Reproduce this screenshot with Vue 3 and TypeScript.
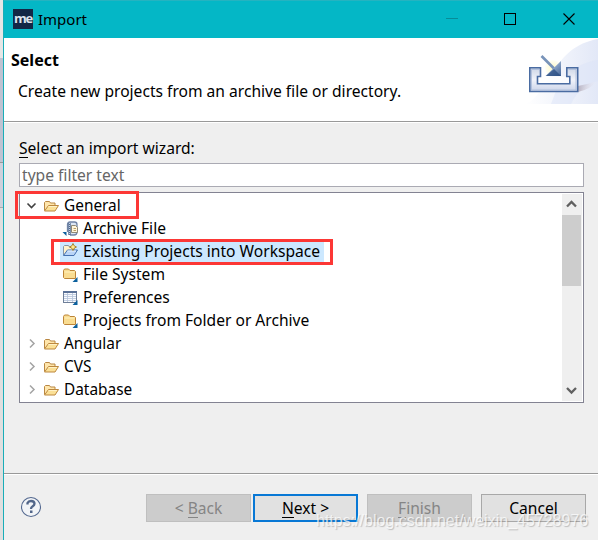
<script setup lang="ts">
import { ref } from 'vue'

type Icon = 'open' | 'archive' | 'existing' | 'folder' | 'table'

interface TreeRow {
  label: string
  icon: Icon
  level: number
  expanded?: boolean
}

const filter = ref('')
const selected = ref('Existing Projects into Workspace')
const rows: TreeRow[] = [
  { label: 'General', icon: 'open', level: 0, expanded: true },
  { label: 'Archive File', icon: 'archive', level: 1 },
  { label: 'Existing Projects into Workspace', icon: 'existing', level: 1 },
  { label: 'File System', icon: 'folder', level: 1 },
  { label: 'Preferences', icon: 'table', level: 1 },
  { label: 'Projects from Folder or Archive', icon: 'folder', level: 1 },
  { label: 'Angular', icon: 'open', level: 0 },
  { label: 'CVS', icon: 'open', level: 0 },
  { label: 'Database', icon: 'open', level: 0 },
]
</script>

<template>
  <div class="screen">
    <div class="backdrop"><i class="pale"></i><i class="blue"></i><i class="blue second"></i><i class="grey"></i></div>
    <div class="window">
      <header class="titlebar">
        <span class="logo"><b>me</b></span>
        <span class="title">Import</span>
        <svg class="controls" width="150" height="38" viewBox="0 0 150 38" fill="none">
          <path d="M8 17.500h12" stroke="#078c98" />
          <rect x="66.500" y="12.500" width="11" height="11" stroke="#000" />
          <path d="M125.500 12.500l11 11M136.500 12.500l-11 11" stroke="#000" stroke-width="1.100" />
        </svg>
      </header>

      <section class="banner">
        <div class="banner-text">
          <h1>Select</h1>
          <p>Create new projects from an archive file or directory.</p>
        </div>
        <svg class="banner-art" width="75" height="66" viewBox="0 0 75 66">
          <defs>
            <linearGradient id="sky" x1="0" y1="0" x2="1" y2="0">
              <stop offset="0" stop-color="#fff" />
              <stop offset="1" stop-color="#dbe2f5" />
            </linearGradient>
            <linearGradient id="tray" x1="0" y1="0" x2="0" y2="1">
              <stop offset="0" stop-color="#cdd6e6" />
              <stop offset=".5" stop-color="#f1f3fa" />
              <stop offset="1" stop-color="#cbd4e9" />
            </linearGradient>
            <linearGradient id="arrow" x1="0" y1="0" x2="1" y2="1">
              <stop offset="0" stop-color="#b9c9df" />
              <stop offset=".5" stop-color="#8ba3c6" />
              <stop offset="1" stop-color="#416396" />
            </linearGradient>
            <radialGradient id="glow">
              <stop offset="0" stop-color="#fff9bd" />
              <stop offset="1" stop-color="#fffce4" stop-opacity=".4" />
            </radialGradient>
            <linearGradient id="shade" x1="0" y1="0" x2="1" y2="0">
              <stop offset="0" stop-color="#aaa0ae" stop-opacity=".75" />
              <stop offset="1" stop-color="#e4e0ec" stop-opacity="0" />
            </linearGradient>
          </defs>
          <path d="M3 66C28 54 29 9 75 1v65z" fill="url(#sky)" opacity=".8" />
          <path d="M35 48Q48 26 75 22V43Q58 46 48 66H28z" fill="#dce4f7" opacity=".5" />
          <path d="M55 48l18-4q-5 7-18 10z" fill="url(#shade)" />
          <circle cx="30" cy="30" r="8" fill="url(#glow)" />
          <path d="M15 38.500h32V45H15z" fill="#fff" opacity=".8" />
          <path d="M6.800 29.800h10.700v8.700h-3v7.300h32.300v-7.300h-3v-8.700h10.900v23.700H6.800z" fill="url(#tray)" stroke="#4a6ca2" stroke-width="1.600" />
          <path d="M8.500 31.500v20.500h44.500V31.500M8.500 31.500h7.500M45.500 31.500h7.500" fill="none" stroke="#a9bad8" stroke-width=".8" />
          <path d="M18.500 18L31 30.500" stroke="#7893b9" stroke-width="2.600" />
          <path d="M38 23V38H22.500z" fill="url(#arrow)" />
          <path d="M38 38H23l8-7z" fill="#24497f" opacity=".7" />
        </svg>
      </section>

      <main class="content">
        <label class="prompt" for="filter"><u>S</u>elect an import wizard:</label>
        <input id="filter" v-model="filter" class="filter" type="text" placeholder="type filter text" />
        <div class="tree">
          <ul class="rows">
            <li v-for="row in rows" :key="row.label" :class="['row', row.level ? 'child' : 'root']" @click="selected = row.label">
              <svg v-if="row.level === 0" class="chevron" width="11" height="11" viewBox="0 0 11 11" fill="none">
                <path v-if="row.expanded" d="M1.500 3.500l4 4 4-4" stroke="#404040" stroke-width="1.600" />
                <path v-else d="M4 1.500l4 4-4 4" stroke="#a3a3a3" stroke-width="1.500" />
              </svg>
              <span :class="['item', { selected: selected === row.label }]">
                <svg class="icon" width="18" height="18" viewBox="0 0 18 18">
                  <template v-if="row.icon === 'open'">
                    <path d="M1.500 13.500V5.500l1-1h4l1 1.500H12v2.500" fill="#ffe6ac" stroke="#b98743" />
                    <path d="M1.500 14l4-5.500h10L12 14z" fill="#fbe096" stroke="#bd883e" />
                    <path d="M5.500 9.500h8.500" stroke="#fff2c7" />
                  </template>
                  <template v-else-if="row.icon === 'archive'">
                    <path d="M5.500 12V4.500q0-2.500 2.500-2.500h4.500q2.500 0 2.500 2.500V12q0 3-3 3H8" fill="#dce6f4" stroke="#7184a6" stroke-width="1.300" />
                    <path d="M9.500 5.500h4l2 2v5h-6z" fill="#fff5db" stroke="#8f8977" />
                    <path d="M11.500 8.500h2.500M11.500 10.500h2.500" stroke="#bb9e64" />
                    <path d="M7.500 3v12" stroke="#4f698f" stroke-width="2.400" />
                    <path d="M7.500 3v12" stroke="#c2d0e5" stroke-width="1" stroke-dasharray="1 1" />
                    <path d="M.5 12h4v4z" fill="#0c5f9e" />
                  </template>
                  <template v-else-if="row.icon === 'existing'">
                    <path d="M1.500 12V3.500l1-1h4L7.500 4H12v3" fill="#fff2c9" stroke="#8694a5" />
                    <path d="M1.500 12.500l4-5.500h10L12 12.500z" fill="#b9d5f7" stroke="#4371b1" />
                    <path d="M5.500 8H14" stroke="#eaf4ff" />
                    <path d="M11 .5l1.200 2.300 2.300 1.200-2.300 1.200L11 7.500 9.800 5.200 7.500 4l2.300-1.200z" fill="#ffe88e" stroke="#a17b25" stroke-width=".9" />
                  </template>
                  <template v-else-if="row.icon === 'folder'">
                    <path d="M1.500 11.500V4.500l1-1.500h4L8 4.500h4.500l1 1v7h-11z" fill="#f9dc91" stroke="#bd8538" />
                    <path d="M2.500 6h10" stroke="#fff2bf" />
                    <path d="M15.500 11v5h-5z" fill="#0b609d" />
                  </template>
                  <template v-else>
                    <rect x="1.500" y="2.500" width="13" height="11" fill="#f9fbff" stroke="#6f7f99" />
                    <path d="M1 3h14" stroke="#5b7298" stroke-width="2" />
                    <path d="M2 5.500h12M2 7.500h12M2 9.500h12M2 11.500h12M5.500 4v9M10.500 4v9" stroke="#b5c4da" stroke-width=".8" />
                    <path d="M15.500 11v5h-5z" fill="#0b609d" />
                  </template>
                </svg>
                <span class="label">{{ row.label }}</span>
              </span>
            </li>
          </ul>
          <div class="scrollbar">
            <svg width="19" height="21" viewBox="0 0 19 21"><path d="M5 12.500l4.500-4.500 4.500 4.500" fill="none" stroke="#606060" stroke-width="2.300" /></svg>
            <div class="thumb"></div>
            <svg class="down" width="19" height="21" viewBox="0 0 19 21"><path d="M5 8l4.500 4.500L14 8" fill="none" stroke="#606060" stroke-width="2.300" /></svg>
          </div>
          <div class="mark general"></div>
          <div class="mark existing"></div>
        </div>
      </main>

      <footer class="actions">
        <svg class="help" width="22" height="22" viewBox="0 0 22 22">
          <circle cx="11" cy="11" r="9.500" fill="#f2f4f7" stroke="#53688f" stroke-width="1.100" />
          <path d="M7.500 8.500V7q1-2 3.500-2 3.500 0 3.500 2.700 0 1.500-2 2.700-1.500 1-1.500 2.600" fill="none" stroke="#526689" stroke-width="2.300" />
          <path d="M10 14.500h2.500V17H10z" fill="#526689" />
        </svg>
        <button class="back" disabled>&lt; <u>B</u>ack</button>
        <button class="next"><u>N</u>ext &gt;</button>
        <button class="finish" disabled><u>F</u>inish</button>
        <button class="cancel">Cancel</button>
      </footer>
    </div>
    <div class="watermark">https://blog.csdn.net/weixin_45728976</div>
  </div>
</template>

<style>
body { margin: 0; overflow: hidden; }
</style>

<style scoped>
* { box-sizing: border-box; }
.screen { position: relative; display: flex; width: 598px; height: 540px; overflow: hidden; font-family: "Noto Sans", "Open Sans", sans-serif; font-size: 15.6px; color: #000; background: #efefef; }
.backdrop { display: flex; flex-direction: column; width: 3px; background: #dedede; }
.backdrop i { display: block; }
.pale { height: 58px; background: #e6e6e6; }
.blue { height: 104px; background: #bfc3d2; }
.second { height: 46px; border-top: 1px solid #999; border-bottom: 1px solid #aaa; background: #ced1dc; }
.grey { flex: 1; background: #dfdfdf; }
.window { display: flex; flex-direction: column; width: 595px; border-left: 1px solid #19adb8; background: #efefef; }
.titlebar { display: flex; align-items: center; height: 38px; padding-left: 9px; background: #04b7c6; border-top: 1px solid #25b3c0; }
.logo { display: flex; width: 20px; height: 20px; margin-top: -1px; justify-content: center; align-items: center; background: #132746; color: #dde3ee; font: 13px "Open Sans", sans-serif; }
.logo b { line-height: 15px; font-weight: 700; letter-spacing: -1.2px; padding-bottom: 2px; }
.title { margin-left: 5px; font-size: 15px; line-height: 20px; margin-top: -1px; }
.controls { margin-left: auto; margin-right: 10px; }
.banner { display: flex; justify-content: space-between; height: 85px; background: #fff; border-bottom: 1px solid #fff; box-shadow: inset 0 -1px #999; }
.banner-text { padding-left: 7px; }
h1 { margin: 11px 0 0; font-size: 16px; line-height: 22px; font-weight: 700; }
p { margin: 10px 0 0 7px; font-size: 15.6px; line-height: 21px; white-space: nowrap; }
.content { display: flex; flex-direction: column; height: 350px; padding: 15px 14px 0 15px; }
.prompt { height: 25px; line-height: 20px; }
u { text-decoration: none; border-bottom: 1px solid currentColor; display: inline-block; line-height: 17px; }
.filter { width: 565px; height: 24px; padding: 0 2px; border: 1px solid #aaaab3; outline: none; background: #fff; font: inherit; color: #555; }
.filter::placeholder { color: #666; opacity: 1; }
.tree { position: relative; display: flex; justify-content: space-between; width: 565px; height: 211px; margin-top: 5px; padding: 1px; border: 1px solid #838392; background: #fff; }
.rows { list-style: none; margin: 0; padding: 0; }
.row { display: flex; align-items: center; height: 23px; }
.root { padding-left: 5px; font-size: 15.4px; }
.child { padding-left: 39px; }
.chevron { margin-right: 6px; }
.item { display: flex; align-items: center; height: 20px; padding-right: 4px; }
.icon { width: 18px; margin-right: 5px; flex: none; }
.child .icon { margin-left: 2px; margin-right: 3px; }
.root .icon { margin-right: 3px; }
.label { line-height: 20px; padding-bottom: 2px; white-space: nowrap; }
.root .label { padding-bottom: 0; }
.selected { background: #cce8ff; }
.scrollbar { display: flex; flex-direction: column; width: 20px; background: #efefef; }
.thumb { width: 19px; height: 71px; background: #cdcdcd; }
.down { margin-top: auto; }
.mark { position: absolute; border: 3px solid #fc3735; }
.general { left: -5px; top: -2px; width: 124px; height: 28px; }
.mark.existing { left: 31px; top: 46px; width: 282px; height: 26px; }
.actions { display: flex; height: 67px; padding: 20px 8px 0 16px; border-top: 1px solid #999; box-shadow: inset 0 1px #fff; }
.help { margin-top: 2px; margin-right: 104px; flex: none; }
button { width: 105px; height: 28px; padding: 0; border: 1px solid #a8a8a8; background: #e1e1e1; font: inherit; color: #000; white-space: pre; flex: none; }
button:disabled { background: #ccc; border-color: #bfbfbf; color: #858585; }
.next { margin-left: 2px; border: 2px solid #0878d5; }
.finish, .cancel { margin-left: 9px; }
.watermark { position: absolute; left: 316px; top: 511px; font: 16px/20px "Liberation Sans", sans-serif; color: rgba(255,255,255,.72); text-shadow: 1px 1px 1px rgba(100,100,100,.35); white-space: nowrap; }
</style>
